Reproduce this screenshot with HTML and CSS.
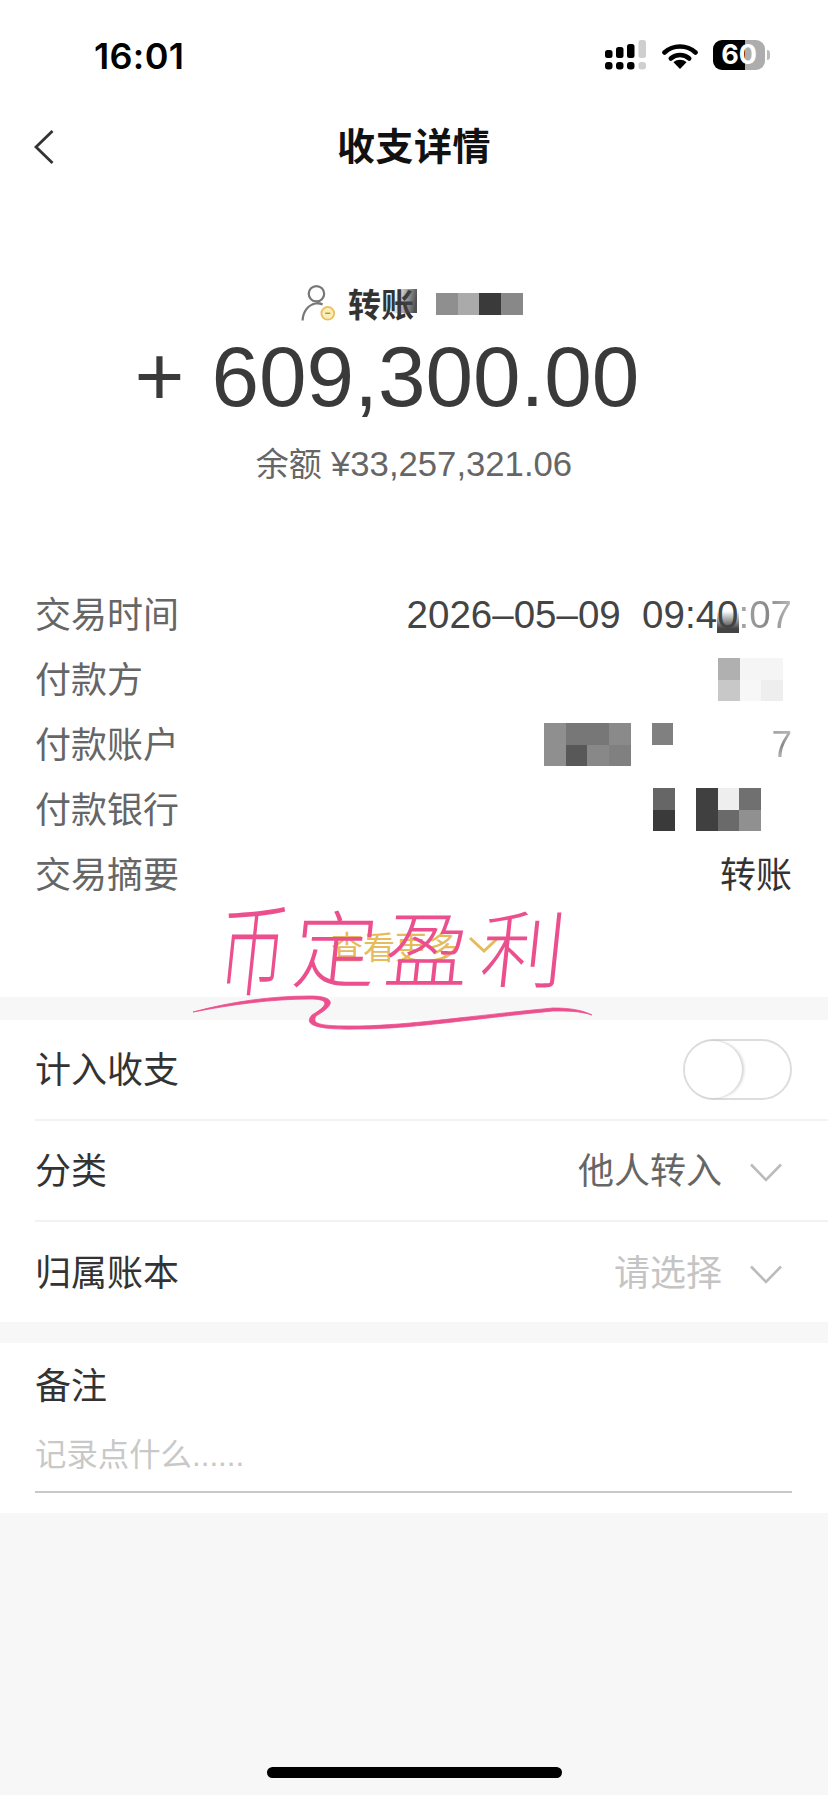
FILE: index.html
```html
<!DOCTYPE html>
<html>
    <head>
        <meta charset="utf-8">
        <title>收支详情</title>
        <link rel="stylesheet" href="styles.css">
    </head>
    <body>
        <div class="page">
            <div class="top">
                <div class="status-bar">
                    <span class="time">16:01</span>
                    <div class="status-icons">
                        <svg class="signal" width="42" height="30" viewBox="0 0 42 30">
                            <g fill="#000">
                                <rect x="0" y="10" width="7.5" height="8" rx="2.5"/>
                                <rect x="11" y="7" width="7.5" height="11" rx="2.5"/>
                                <rect x="22" y="4" width="7.5" height="14" rx="2.5"/>
                                <rect x="0" y="22" width="7.5" height="7.5" rx="3"/>
                                <rect x="11" y="22" width="7.5" height="7.5" rx="3"/>
                                <rect x="22" y="22" width="7.5" height="7.5" rx="3"/>
                            </g>
                            <g fill="#cfcfcf">
                                <rect x="33.5" y="0" width="7.5" height="18" rx="2.5"/>
                                <rect x="33.5" y="22" width="7.5" height="7.5" rx="3"/>
                            </g>
                        </svg>
                        <svg class="wifi" width="36" height="26" viewBox="0 0 36 26">
                            <path d="M2.5 9.5C11 1.5 25 1.5 33.5 9.5" fill="none" stroke="#000" stroke-width="4.6" stroke-linecap="round"/>
                            <path d="M8.8 15.5C14 10.8 22 10.8 27.2 15.5" fill="none" stroke="#000" stroke-width="4.6" stroke-linecap="round"/>
                            <path d="M11.5 19.2C15.5 16 20.5 16 24.5 19.2L18 26Z" fill="#000"/>
                        </svg>
                        <div class="battery">
                            <div class="battery-body">60</div>
                            <div class="battery-nub"></div>
                        </div>
                    </div>
                </div>
                <div class="nav">
                    <svg class="back" width="20" height="34" viewBox="0 0 20 34">
                        <path d="M18.5 1L2 17L18.5 33" fill="none" stroke="#333" stroke-width="2.8"/>
                    </svg>
                    <span class="nav-title">收支详情</span>
                </div>

                <div class="summary">
                    <div class="source">
                        <svg class="person" width="35" height="38" viewBox="0 0 34 36">
                            <circle cx="15" cy="9" r="7.5" fill="none" stroke="#777" stroke-width="2.2"/>
                            <path d="M1.5 35C2 26 7 20 14 18.5C16 18 19 18.5 21 19.5" fill="none" stroke="#777" stroke-width="2.2"/>
                            <circle cx="26" cy="28" r="6.2" fill="#fbeeb8" stroke="#e9c161" stroke-width="1.8"/>
                            <path d="M23.5 28H28.5" stroke="#b9933c" stroke-width="1.4"/>
                        </svg>
                        <span class="source-name">转账<i class="source-blur"></i></span>
                        <div class="mosaic mosaic-source">
                            <i class="g-8f"></i><i class="g-8f"></i>
                            <i class="g-aa"></i><i class="g-aa"></i>
                            <i class="g-3a"></i><i class="g-3a"></i>
                            <i class="g-88"></i><i class="g-88"></i>
                        </div>
                    </div>
                    <div class="amount"><span class="plus">+</span>609,300.00</div>
                    <div class="balance">余额 <span class="balance-num">¥33,257,321.06</span></div>
                </div>

                <div class="details">
                    <div class="detail-row">
                        <span class="label">交易时间</span>
                        <span class="value date">2026–05–09&nbsp; 09:4<span class="date-digit">0<i class="date-blur"></i></span><span class="date-fade">:07</span></span>
                    </div>
                    <div class="detail-row">
                        <span class="label">付款方</span>
                        <div class="mosaic mosaic-payer">
                            <i class="g-b0"></i><i class="g-c8"></i>
                            <i class="g-f5"></i><i class="g-f7"></i>
                            <i class="g-f5"></i><i class="g-ee"></i>
                        </div>
                    </div>
                    <div class="detail-row">
                        <span class="label">付款账户</span>
                        <div class="value account">
                            <div class="mosaic">
                                <i class="g-8f"></i><i class="g-8f"></i>
                                <i class="g-77"></i><i class="g-58"></i>
                                <i class="g-77"></i><i class="g-88"></i>
                                <i class="g-8a"></i><i class="g-80"></i>
                            </div>
                            <div class="mosaic mosaic-gap"><i class="g-80"></i><i class="g-none"></i></div>
                            <span class="account-tail">7</span>
                        </div>
                    </div>
                    <div class="detail-row">
                        <span class="label">付款银行</span>
                        <div class="value bank">
                            <div class="mosaic"><i class="g-66"></i><i class="g-3a"></i></div>
                            <div class="mosaic mosaic-gap">
                                <i class="g-40"></i><i class="g-40"></i>
                                <i class="g-ee"></i><i class="g-6a"></i>
                                <i class="g-70"></i><i class="g-90"></i>
                            </div>
                        </div>
                    </div>
                    <div class="detail-row">
                        <span class="label">交易摘要</span>
                        <span class="value label-like">转账</span>
                    </div>
                </div>

                <div class="more">
                    <span>查看更多</span>
                    <svg width="32" height="18" viewBox="0 0 32 18">
                        <path d="M2 2L16 15L30 2" fill="none" stroke="#e6bb5c" stroke-width="3"/>
                    </svg>
                </div>
            </div>

            <div class="settings">
                <div class="setting-row">
                    <span class="setting-label">计入收支</span>
                    <div class="toggle"><div class="toggle-knob"></div></div>
                </div>
                <div class="setting-row">
                    <span class="setting-label">分类</span>
                    <div class="picker">
                        <span class="picker-text">他人转入</span>
                        <svg width="32" height="19" viewBox="0 0 32 19">
                            <path d="M1 1.5L16 17L31 1.5" fill="none" stroke="#bbb" stroke-width="2.6"/>
                        </svg>
                    </div>
                </div>
                <div class="setting-row">
                    <span class="setting-label">归属账本</span>
                    <div class="picker picker-empty">
                        <span class="picker-text">请选择</span>
                        <svg width="32" height="19" viewBox="0 0 32 19">
                            <path d="M1 1.5L16 17L31 1.5" fill="none" stroke="#bbb" stroke-width="2.6"/>
                        </svg>
                    </div>
                </div>
            </div>

            <div class="note">
                <div class="note-title">备注</div>
                <div class="note-input">记录点什么......</div>
            </div>

            <div class="home-bar"></div>

            <!-- 手写水印 -->
            <div class="scrawl">
                <span class="scrawl-1">币</span>
                <span class="scrawl-2">定</span>
                <span class="scrawl-3">盈</span>
                <span class="scrawl-4">利</span>
            </div>
            <svg class="swoosh" width="440" height="60" viewBox="0 0 440 60">
                <path d="M23 32C60 22 100 16 140 16C158 16 172 21 146 36C140 46 158 46 190 46C240 45 300 36 383 28C400 28 412 30 422 35C410 31 398 31 383 31C300 39 240 49 190 49C150 50 132 46 142 35C164 22 154 19 140 19C100 19 60 25 23 32Z" fill="#ec4f8d" stroke="#ec4f8d" stroke-width="0.8"/>
            </svg>
        </div>
    </body>
</html>
```

FILE: styles.css
```css
*{
    box-sizing: border-box;
}

body{
    margin: 0;
    font-family: "Liberation Sans", "Noto Sans CJK SC", sans-serif;
}

.page{
    position: relative;
    width: 828px;
    height: 1795px;
    overflow: hidden;
    background-color: #f7f7f7;
    display: flex;
    flex-direction: column;
}

.top{
    height: 997px;
    background-color: #fff;
}

/* status bar */
.status-bar{
    height: 90px;
    padding: 36px 58px 0 94px;
    display: flex;
    justify-content: space-between;
    align-items: flex-start;
}

.time{
    font-family: Inter, sans-serif;
    font-size: 36px;
    font-weight: 600;
    line-height: 40px;
    letter-spacing: 0.3px;
    color: #000;
}

.status-icons{
    display: flex;
    align-items: flex-start;
}

.signal{
    margin-top: 4px;
}

.wifi{
    margin: 7px 15px 0 15px;
}

.battery{
    display: flex;
    align-items: center;
    margin-top: 4px;
}

.battery-body{
    width: 52px;
    height: 30px;
    border-radius: 9px;
    background: linear-gradient(90deg, #000 32px, #adadad 32px);
    text-align: center;
    font-family: Inter, sans-serif;
    font-size: 27px;
    font-weight: 700;
    line-height: 30px;
    color: #fff;
}

.battery-nub{
    width: 3px;
    height: 10px;
    margin-left: 2px;
    border-radius: 0 3px 3px 0;
    background-color: #bbb;
}

/* nav */
.nav{
    position: relative;
    height: 114px;
    display: flex;
    align-items: center;
    justify-content: center;
}

.back{
    position: absolute;
    left: 34px;
    top: 40px;
}

.nav-title{
    margin-bottom: 8px;
    font-size: 38px;
    font-weight: 700;
    color: #111;
    letter-spacing: 0.5px;
}

/* summary */
.summary{
    padding-top: 79px;
    text-align: center;
}

.source{
    height: 40px;
    padding-left: 301px;
    display: flex;
    align-items: center;
}

.source-name{
    position: relative;
    margin-left: 12px;
    font-size: 33px;
    font-weight: 700;
    color: #333;
}

.source-blur{
    position: absolute;
    right: -3px;
    top: 10px;
    width: 24px;
    height: 24px;
    background: linear-gradient(100deg, rgba(90,90,90,0) 10%, rgba(70,70,70,0.95) 90%);
}

.amount{
    height: 90px;
    margin-top: 9px;
    padding-right: 54px;
    font-size: 85.5px;
    line-height: 90px;
    color: #3a3a3a;
}

.plus{
    margin-right: 27px;
}

.balance{
    height: 44px;
    margin-top: 20px;
    font-size: 33px;
    line-height: 44px;
    color: #666;
}

.balance-num{
    font-size: 34.7px;
}

/* mosaic cells */
.mosaic{
    display: grid;
    grid-auto-flow: column;
    grid-template-rows: repeat(2, 21.7px);
    grid-auto-columns: 21.7px;
}

.mosaic-source{
    margin-left: 22px;
    margin-top: 2px;
    grid-template-rows: repeat(2, 11.2px);
}

.mosaic-gap{
    margin-left: 21px;
}

.mosaic-payer{
    margin-right: 9px;
}

.g-3a{ background-color: #3a3a3a; }
.g-40{ background-color: #404040; }
.g-58{ background-color: #585858; }
.g-66{ background-color: #666; }
.g-6a{ background-color: #6a6a6a; }
.g-70{ background-color: #707070; }
.g-77{ background-color: #777; }
.g-80{ background-color: #808080; }
.g-88{ background-color: #888; }
.g-8a{ background-color: #8a8a8a; }
.g-8f{ background-color: #8f8f8f; }
.g-90{ background-color: #909090; }
.g-aa{ background-color: #aaa; }
.g-b0{ background-color: #b0b0b0; }
.g-c8{ background-color: #c8c8c8; }
.g-ee{ background-color: #eee; }
.g-f5{ background-color: #f5f5f5; }
.g-f7{ background-color: #f7f7f7; }
.g-none{ background-color: transparent; }

/* details */
.details{
    margin-top: 96px;
    padding: 0 36px 0 35px;
}

.detail-row{
    height: 65px;
    display: flex;
    justify-content: space-between;
    align-items: center;
}

.label{
    margin-bottom: 5px;
    font-size: 36px;
    color: #666;
}

.value{
    font-size: 36px;
    color: #333;
}

.label-like{
    margin-bottom: 5px;
}

.date{
    font-size: 38.5px;
    color: #444;
    white-space: nowrap;
}

.date-digit{
    position: relative;
}

.date-blur{
    position: absolute;
    left: 0;
    top: 18px;
    width: 22px;
    height: 22px;
    background: linear-gradient(180deg, rgba(68,68,68,0), #444 80%);
}

.date-fade{
    background: linear-gradient(90deg, #aaa, #888 55%, #bbb);
    -webkit-background-clip: text;
    background-clip: text;
    color: transparent;
}

.account{
    display: flex;
    align-items: center;
}

.account-tail{
    margin-left: 98px;
    font-size: 37px;
    background: linear-gradient(200deg, #ccc, #888 50%, #ddd);
    -webkit-background-clip: text;
    background-clip: text;
    color: transparent;
}

.bank{
    display: flex;
    margin-right: 31px;
}

.more{
    height: 50px;
    margin-top: 13px;
    padding-left: 331px;
    display: flex;
    align-items: center;
    font-size: 32px;
    color: #e6bb5c;
}

.more svg{
    margin-left: 9px;
}

/* settings */
.settings{
    margin-top: 23px;
    background-color: #fff;
}

.setting-row{
    height: 101px;
    margin-left: 35px;
    padding-right: 36px;
    border-bottom: 2px solid #f2f2f2;
    display: flex;
    justify-content: space-between;
    align-items: center;
}

.setting-row:last-child{
    height: 100px;
    border-bottom: none;
}

.setting-label{
    margin-bottom: 5px;
    font-size: 36px;
    color: #333;
}

.toggle{
    position: relative;
    width: 109px;
    height: 61px;
    border: 2px solid #ddd;
    border-radius: 31px;
    background-color: #fff;
}

.toggle-knob{
    width: 57px;
    height: 57px;
    border-radius: 50%;
    background-color: #fff;
    box-shadow: 2px 0 3px rgba(0,0,0,0.18);
}

.picker{
    display: flex;
    align-items: center;
    font-size: 36px;
    color: #666;
}

.picker-text{
    margin-bottom: 5px;
}

.picker svg{
    margin: 4px 10px 0 28px;
}

.picker-empty{
    color: #c4c4c4;
}

/* note */
.note{
    height: 170px;
    margin-top: 21px;
    padding: 22px 36px 0 35px;
    background-color: #fff;
}

.note-title{
    font-size: 36px;
    line-height: 44px;
    color: #333;
}

.note-input{
    height: 84px;
    padding-top: 25px;
    border-bottom: 2px solid #c8c8c8;
    font-size: 31.4px;
    line-height: 44px;
    color: #c8c8c8;
}

.home-bar{
    position: absolute;
    left: 267px;
    top: 1767px;
    width: 295px;
    height: 11px;
    border-radius: 6px;
    background-color: #000;
}

/* watermark over the page */
.scrawl{
    position: absolute;
    left: 212px;
    top: 890px;
    display: flex;
    font-family: "Noto Sans CJK SC", sans-serif;
    font-size: 84px;
    font-weight: 300;
    line-height: 110px;
    color: #ec4f8d;
}

.scrawl span{
    display: block;
    transform: skewX(-6deg);
}

.scrawl .scrawl-1{
    width: 82px;
    transform: skewX(-6deg) scale(0.8, 1.2);
}

.scrawl-2{
    width: 92px;
}

.scrawl-3{
    width: 96px;
}

.swoosh{
    position: absolute;
    left: 170px;
    top: 980px;
}
```
